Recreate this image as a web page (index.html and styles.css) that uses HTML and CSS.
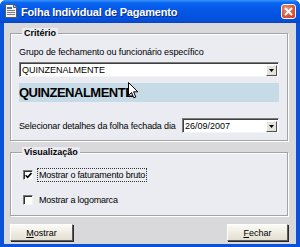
FILE: index.html
```html
<!DOCTYPE html>
<html>
<head>
<meta charset="utf-8">
<link rel="stylesheet" href="styles.css">
</head>
<body>
<div class="window">
  <div class="titlebar">
    <svg class="app-icon" width="12" height="14" viewBox="0 0 12 14">
      <path d="M0.5 0.5h8l3 3v10h-11z" fill="#f4f4f4" stroke="#5a5a5a"/>
      <path d="M8.5 0.5v3h3" fill="#d0d0d0" stroke="#5a5a5a"/>
      <rect x="2" y="3" width="5" height="2" fill="#4a6fb0"/>
      <path d="M2 6.5h8M2 8.5h8M2 10.5h8" stroke="#7a7a7a"/>
    </svg>
    <span class="title">Folha Individual de Pagamento</span>
    <div class="close">
      <svg width="9" height="9" viewBox="0 0 9 9"><path d="M1 1L8 8M8 1L1 8" stroke="#fff" stroke-width="2"/></svg>
    </div>
  </div>
  <div class="frame">
    <div class="client">
      <fieldset class="group g1">
        <legend>Critério</legend>
        <div class="label">Grupo de fechamento ou funcionário específico</div>
        <div class="combo">
          <span class="combo-text">QUINZENALMENTE</span>
          <span class="drop"><svg width="5" height="3" viewBox="0 0 5 3"><path d="M0 0h5L2.5 3z" fill="#000"/></svg></span>
        </div>
        <div class="band">QUINZENALMENTE</div>
        <div class="row">
          <span class="row-label">Selecionar detalhes da folha fechada dia</span>
          <div class="combo date">
            <span class="combo-text">26/09/2007</span>
            <span class="drop"><svg width="5" height="3" viewBox="0 0 5 3"><path d="M0 0h5L2.5 3z" fill="#000"/></svg></span>
          </div>
        </div>
      </fieldset>
      <fieldset class="group g2">
        <legend>Visualização</legend>
        <div class="check">
          <span class="box"><svg width="7" height="7" viewBox="0 0 7 7"><path d="M0.5 3.2L2.6 5.3L6.5 1" stroke="#000" stroke-width="1.6" fill="none"/></svg></span>
          <span class="check-label focus">Mostrar o faturamento bruto</span>
        </div>
        <div class="check">
          <span class="box"></span>
          <span class="check-label">Mostrar a logomarca</span>
        </div>
      </fieldset>
      <div class="buttons">
        <div class="btn"><u>M</u>ostrar</div>
        <div class="btn fechar"><u>F</u>echar</div>
      </div>
    </div>
  </div>
  <svg class="cursor" width="11" height="17" viewBox="0 0 11 17">
    <path d="M0.5 0.5V13.5L3.5 10.5L5.8 15.8L7.8 15L5.6 9.8H9.8Z" fill="#fff" stroke="#000" stroke-width="1" stroke-linejoin="miter"/>
  </svg>
</div>
</body>
</html>
```
FILE: styles.css
```css
* { box-sizing: border-box; }
html, body { margin: 0; padding: 0; }
body {
  width: 300px;
  height: 247px;
  overflow: hidden;
  background: #ffffff;
  font-family: "Liberation Sans", Arial, sans-serif;
  font-size: 9px;
  color: #000;
}
.window {
  position: relative;
  width: 300px;
  height: 247px;
  display: flex;
  flex-direction: column;
  background: #0a52d8;
  border-radius: 6px 6px 0 0;
  overflow: hidden;
}
.titlebar {
  height: 23px;
  flex: 0 0 23px;
  display: flex;
  align-items: center;
  padding: 0 4px 0 5px;
  background: linear-gradient(to bottom, #3d95ff 0%, #0a66f0 12%, #0558e8 40%, #0453e0 70%, #0550da 88%, #0a44c2 100%);
}
.app-icon { flex: 0 0 auto; margin-top: -1px; }
.title {
  flex: 1;
  margin-left: 4px;
  color: #fff;
  font-weight: bold;
  font-size: 11px;
  letter-spacing: -0.2px;
  text-shadow: 1px 1px 0 #0a2a8a;
}
.close {
  width: 15px;
  height: 15px;
  border: 1px solid #fff;
  border-radius: 3px;
  background: radial-gradient(circle at 35% 30%, #f0947a 0%, #e06040 45%, #c83c1c 100%);
  display: flex;
  align-items: center;
  justify-content: center;
  margin-top: 0px;
}
.frame {
  flex: 1;
  padding: 0 4px 3px 4px;
  display: flex;
}
.client {
  flex: 1;
  background: #d9d9dc;
  padding: 5px 8px 0 6px;
  display: flex;
  flex-direction: column;
}
.group {
  margin: 0;
  padding: 0 8px 0 8px;
  min-width: 0;
  background: #eaecf2;
  border: 1px solid #a3a3a6;
  box-shadow: inset 1px 1px 0 #ffffff, 1px 1px 0 #ffffff;
}
.group legend {
  padding: 0 2px;
  margin-left: 3px;
  font-weight: bold;
  font-size: 9px;
  line-height: 11px;
  background: #eaecf2;
}
.g1 { height: 113px; }
.g2 { height: 69px; margin-top: 6px; }
.label {
  margin-top: 8px;
  line-height: 11px;
  letter-spacing: -0.1px;
}
.combo {
  margin-top: 4px;
  height: 15px;
  background: #fff;
  border: 1px solid;
  border-color: #7a7a7a #f4f4f4 #f4f4f4 #7a7a7a;
  box-shadow: inset 1px 1px 0 #404040;
  display: flex;
  align-items: center;
  padding: 0 1px 0 2px;
}
.combo-text { flex: 1; line-height: 11px; padding-top: 1px; }
.drop {
  width: 11px;
  height: 11px;
  margin-top: 1px;
  background: #e4e2da;
  border: 1px solid;
  border-color: #fff #505050 #505050 #fff;
  display: flex;
  align-items: center;
  justify-content: center;
}
.band {
  margin-top: 6px;
  height: 19px;
  background: #c6dbe6;
  font-weight: bold;
  font-size: 13px;
  letter-spacing: -0.5px;
  line-height: 19px;
  padding-left: 0px;
}
.row {
  margin-top: 16px;
  display: flex;
  align-items: center;
  justify-content: space-between;
}
.row-label { letter-spacing: -0.15px; }
.date { margin-top: 0; width: 97px; }
.check {
  display: flex;
  align-items: center;
  height: 14px;
  margin-left: 4px;
}
.check:first-of-type { margin-top: 10px; }
.check + .check { margin-top: 11px; }
.box {
  width: 10px;
  height: 10px;
  background: #fff;
  border: 1px solid;
  border-color: #7a7a7a #f4f4f4 #f4f4f4 #7a7a7a;
  box-shadow: inset 1px 1px 0 #303030;
  display: flex;
  align-items: center;
  justify-content: center;
  padding: 1px 0 0 1px;
}
.check-label {
  margin-left: 4px;
  line-height: 12px;
  padding: 0 1px;
  letter-spacing: -0.2px;
  border: 1px solid transparent;
}
.focus { border: 1px dotted #333; }
.buttons {
  margin-top: 8px;
  display: flex;
  justify-content: space-between;
}
.btn {
  width: 63px;
  height: 17px;
  display: flex;
  align-items: center;
  justify-content: center;
  background: linear-gradient(to bottom, #fbfaf5 0%, #efede3 50%, #e3dfd0 100%);
  border: 1px solid;
  border-color: #ffffff #5c5c5c #5c5c5c #ffffff;
  box-shadow: 1px 1px 0 #2a2a2a;
  font-size: 9px;
}
.btn u { text-decoration: underline; }
.fechar { width: 61px; }
.cursor {
  position: absolute;
  left: 128px;
  top: 82px;
}
```
